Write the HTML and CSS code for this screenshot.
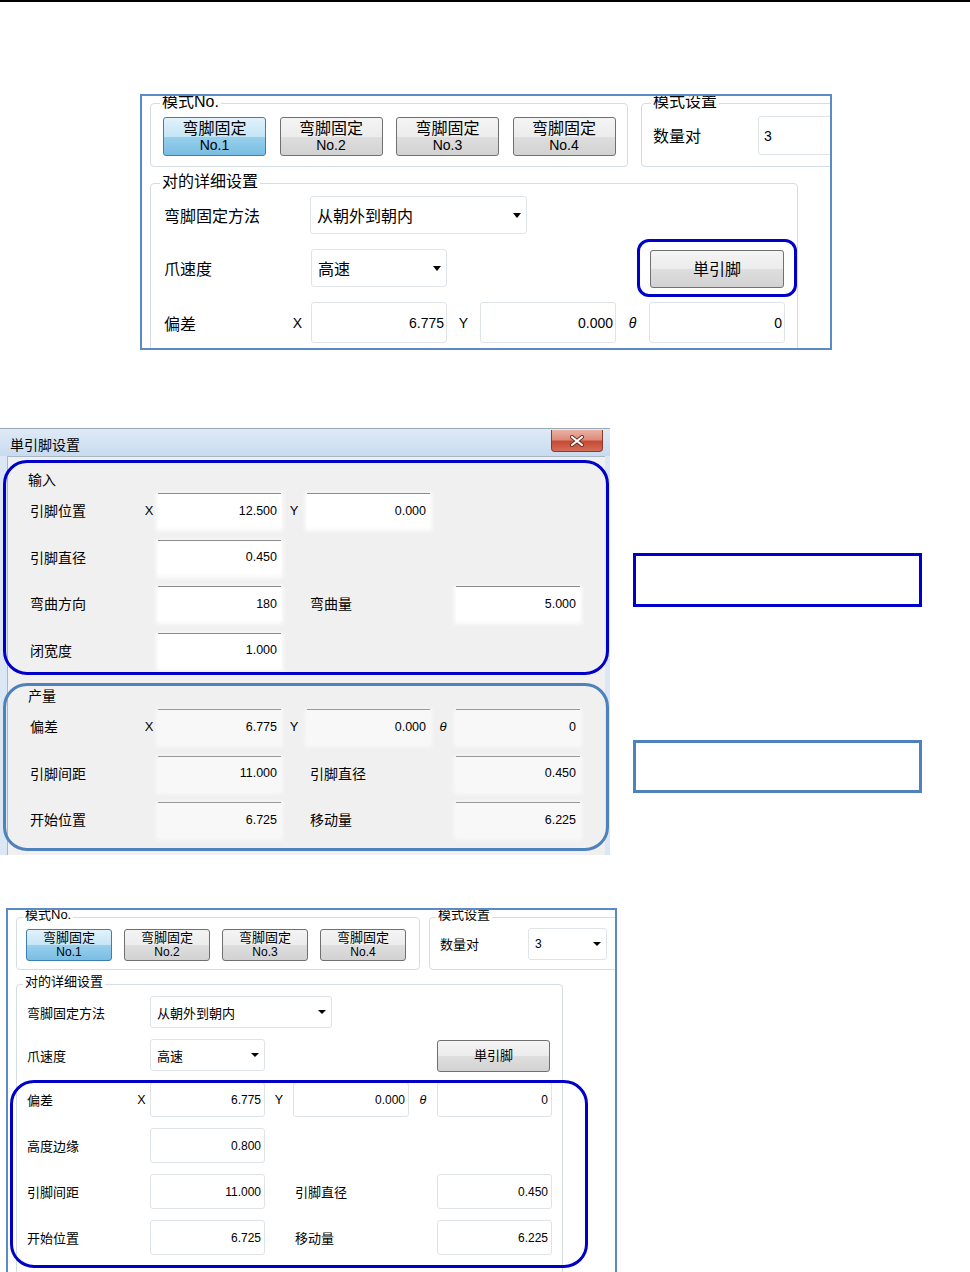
FILE: index.html
```html
<!DOCTYPE html>
<html lang="zh-CN">
<head>
<meta charset="utf-8">
<title>単引脚设置</title>
<link rel="stylesheet" href="styles.css">
</head>
<body>
<div class="topline"></div>

<section class="panel p1">
  <div class="row-top">
    <div class="group g-mode">
      <span class="legend">模式No.</span>
      <div class="btns">
        <div class="btn sel"><span>弯脚固定</span><span class="lat">No.1</span></div>
        <div class="btn"><span>弯脚固定</span><span class="lat">No.2</span></div>
        <div class="btn"><span>弯脚固定</span><span class="lat">No.3</span></div>
        <div class="btn"><span>弯脚固定</span><span class="lat">No.4</span></div>
      </div>
    </div>
    <div class="group g-set">
      <span class="legend">模式设置</span>
      <span class="lbl">数量对</span>
      <div class="field left">3</div>
    </div>
  </div>
  <div class="group g-detail">
    <span class="legend">对的详细设置</span>
    <div class="grid">
      <span class="lbl">弯脚固定方法</span>
      <div class="select s-wide"><span>从朝外到朝内</span><i class="arrow"></i></div>

      <span class="lbl">爪速度</span>
      <div class="select s-short"><span>高速</span><i class="arrow"></i></div>
      <div class="btn single ring"><span>単引脚</span></div>

      <span class="lbl">偏差</span>
      <span class="ax">X</span><div class="field">6.775</div>
      <span class="ax">Y</span><div class="field">0.000</div>
      <span class="ax th">θ</span><div class="field">0</div>
    </div>
  </div>
</section>

<section class="sec2">
  <div class="dialog">
    <div class="titlebar">
      <span class="title">単引脚设置</span>
      <div class="close">
        <svg width="16" height="12" viewBox="0 0 16 12"><path d="M3 2 L13 10 M13 2 L3 10" stroke="#6b2a20" stroke-width="4" stroke-linecap="round"/><path d="M3 2 L13 10 M13 2 L3 10" stroke="#ffffff" stroke-width="2.2" stroke-linecap="round"/></svg>
      </div>
    </div>
    <div class="dbody">
      <div class="dgroup in">
        <span class="dlegend">输入</span>
        <div class="dgrid">
          <span class="lbl">引脚位置</span>
          <span class="ax">X</span><div class="dfield">12.500</div>
          <span class="ax">Y</span><div class="dfield">0.000</div>

          <span class="lbl">引脚直径</span>
          <div class="dfield c3">0.450</div>

          <span class="lbl">弯曲方向</span>
          <div class="dfield c3">180</div>
          <span class="lbl c5">弯曲量</span>
          <div class="dfield c7">5.000</div>

          <span class="lbl">闭宽度</span>
          <div class="dfield c3">1.000</div>
        </div>
      </div>
      <div class="dgroup out">
        <span class="dlegend">产量</span>
        <div class="dgrid">
          <span class="lbl">偏差</span>
          <span class="ax">X</span><div class="dfield">6.775</div>
          <span class="ax">Y</span><div class="dfield">0.000</div>
          <span class="ax th">θ</span><div class="dfield">0</div>

          <span class="lbl">引脚间距</span>
          <div class="dfield c3">11.000</div>
          <span class="lbl c5">引脚直径</span>
          <div class="dfield c7">0.450</div>

          <span class="lbl">开始位置</span>
          <div class="dfield c3">6.725</div>
          <span class="lbl c5">移动量</span>
          <div class="dfield c7">6.225</div>
        </div>
      </div>
    </div>
  </div>
  <div class="callouts">
    <div class="callout c1"></div>
    <div class="callout c2"></div>
  </div>
</section>

<section class="panel p3">
  <div class="row-top">
    <div class="group g-mode">
      <span class="legend">模式No.</span>
      <div class="btns">
        <div class="btn sel"><span>弯脚固定</span><span class="lat">No.1</span></div>
        <div class="btn"><span>弯脚固定</span><span class="lat">No.2</span></div>
        <div class="btn"><span>弯脚固定</span><span class="lat">No.3</span></div>
        <div class="btn"><span>弯脚固定</span><span class="lat">No.4</span></div>
      </div>
    </div>
    <div class="group g-set">
      <span class="legend">模式设置</span>
      <span class="lbl">数量对</span>
      <div class="select s-num"><span class="lat">3</span><i class="arrow"></i></div>
    </div>
  </div>
  <div class="group g-detail">
    <span class="legend">对的详细设置</span>
    <div class="grid a">
      <span class="lbl">弯脚固定方法</span>
      <div class="select s-wide"><span>从朝外到朝内</span><i class="arrow"></i></div>

      <span class="lbl">爪速度</span>
      <div class="select s-short"><span>高速</span><i class="arrow"></i></div>
      <div class="btn single"><span>単引脚</span></div>
    </div>
    <div class="grid b">
      <span class="lbl">偏差</span>
      <span class="ax">X</span><div class="field">6.775</div>
      <span class="ax">Y</span><div class="field">0.000</div>
      <span class="ax th">θ</span><div class="field">0</div>

      <span class="lbl">高度边缘</span>
      <div class="field c3">0.800</div>

      <span class="lbl">引脚间距</span>
      <div class="field c3">11.000</div>
      <span class="lbl c5">引脚直径</span>
      <div class="field c7">0.450</div>

      <span class="lbl">开始位置</span>
      <div class="field c3">6.725</div>
      <span class="lbl c5">移动量</span>
      <div class="field c7">6.225</div>
    </div>
  </div>
</section>
</body>
</html>
```

FILE: styles.css
```css
* { box-sizing: border-box; margin: 0; padding: 0; }
html, body { width: 970px; height: 1272px; overflow: hidden; background: #fff; }
body { font-family: "Liberation Sans", "Noto Sans CJK SC", sans-serif; color: #000; }

.topline { height: 2px; background: #000; }

/* ---------- common ---------- */
.panel { border: 2px solid #5b8bc6; overflow: hidden; background: #fff; }
.row-top { display: flex; }
.group { position: relative; border: 1px solid #d5dde4; border-radius: 4px; flex-shrink: 0; }
.legend { position: absolute; background: #fff; padding: 0 2px; white-space: nowrap; }
.btns { display: flex; }
.btn {
  display: flex; flex-direction: column; align-items: center; justify-content: center;
  border: 1px solid #707070; border-radius: 3px;
  background: linear-gradient(#f4f4f4 0%, #ececec 50%, #dedede 51%, #d2d2d2 100%);
  white-space: nowrap;
}
.btn.sel {
  border-color: #3c7fb1;
  background: linear-gradient(#e2f2fb 0%, #c4e5f6 50%, #98d0ed 51%, #79bde2 100%);
}
.field {
  border: 1px solid #dfe4e9; border-radius: 3px; background: #fff;
  display: flex; align-items: center; justify-content: flex-end;
}
.field.left { justify-content: flex-start; }
.select {
  border: 1px solid #dfe4e9; border-radius: 3px; background: #fff;
  display: flex; align-items: center; justify-content: space-between;
  white-space: nowrap;
}
.arrow { display: block; width: 0; height: 0; border-left: 4px solid transparent; border-right: 4px solid transparent; border-top: 5px solid #000; }
.grid { display: grid; align-items: center; }
.lbl { white-space: nowrap; }
.grid .lbl, .dgrid .lbl { grid-column: 1; }
.ax { text-align: center; }
.th { font-style: italic; }
.grid .c3, .dgrid .c3 { grid-column: 3; }
.grid .c5, .dgrid .c5 { grid-column: 5; }
.grid .c7, .dgrid .c7 { grid-column: 7; }

/* ---------- panel 1 ---------- */
.p1 { margin: 92px 0 0 140px; width: 692px; height: 256px; font-size: 16px; }
.p1 .row-top { margin: 7px 0 0 8px; gap: 13px; }
.p1 .legend { left: 9px; top: -11px; line-height: 18px; }
.p1 .g-mode { width: 478px; height: 64px; padding: 13px 0 0 12px; }
.p1 .btns { gap: 13.5px; }
.p1 .btn { width: 103px; height: 39px; line-height: 17px; }
.p1 .btn .lat { font-size: 14px; }
.p1 .g-set { width: 220px; height: 64px; display: flex; align-items: flex-start; padding: 12px 0 0 11px; }
.p1 .g-set .lbl { width: 105px; line-height: 42px; }
.p1 .g-set .field { width: 100px; height: 39px; padding-left: 5px; font-size: 14px; }
.p1 .g-detail { margin: 16px 0 0 8px; width: 648px; height: 220px; padding: 12px 0 0 13px; }
.p1 .grid { grid-template-columns: 120px 27px 136px 33px 136px 33px 136px; grid-template-rows: 38px 38px 41px; row-gap: 15px; }
.p1 .select { grid-column: 3; height: 38px; padding: 0 5px 0 6px; justify-self: start; }
.p1 .select .arrow { border-left-width: 4.5px; border-right-width: 4.5px; }
.p1 .s-wide { width: 217px; margin-left: -1px; }
.p1 .s-short { width: 136px; }
.p1 .single { grid-column: 7; width: 134px; height: 38px; margin: 1px 0 0 1px; align-self: start; }
.p1 .field { height: 41px; font-size: 14px; padding-right: 2px; }
.p1 .ax { font-size: 14px; }
.ring { position: relative; }
.ring::after {
  content: ""; position: absolute; left: -14px; right: -14px; top: -12px; bottom: -10px;
  border: 3px solid #0000c8; border-radius: 12px;
}

/* ---------- dialog ---------- */
.sec2 { display: flex; margin-top: 78px; }
.dialog {
  width: 610px; height: 427px; flex-shrink: 0; overflow: hidden;
  background: #dbe7f4; border-top: 1px solid #9aa9b8;
  display: flex; flex-direction: column;
}
.titlebar {
  height: 27px; flex-shrink: 0; display: flex; justify-content: space-between; align-items: flex-start;
  background: linear-gradient(#dfeaf6, #c8dbef); padding-left: 10px;
}
.title { font-size: 14px; line-height: 18px; padding-top: 7px; }
.close {
  width: 52px; height: 22px; margin: 1px 7px 0 0;
  border: 1px solid #8d3a2c; border-top: 0; border-radius: 0 0 4px 4px;
  background: linear-gradient(#eab2a6 0%, #de8c7b 45%, #c74a33 55%, #d46e59 100%);
  display: flex; align-items: center; justify-content: center;
}
.dbody {
  flex: 1; margin: 0 5px 0 7px; background: #f0f0f0;
  border-left: 1px solid #a9b8c8; border-top: 1px solid #a9b8c8;
  font-size: 14px;
}
.dgroup { position: relative; }
.dgroup::after {
  content: ""; position: absolute; left: -5px; right: -4px; top: 0; bottom: 0;
  border: 3px solid #0000c8; border-radius: 24px;
}
.dgroup.in { margin-top: 3px; height: 215px; padding: 11px 0 0 20px; }
.dgroup.out { margin-top: 8px; height: 168px; padding: 4px 0 0 20px; }
.dgroup.out::after { border-color: #4f81bd; }
.dlegend { display: block; line-height: 18px; }
.dgrid {
  display: grid; margin: 4px 0 0 2px; align-items: center;
  grid-template-columns: 110px 18px 123px 26px 123px 26px 124px; grid-auto-rows: 34px;
}
.in .dgrid { row-gap: 12.67px; }
.out .dgrid { row-gap: 12.5px; }
.dgrid .lbl.c5 { padding-left: 3px; }
.dgrid .ax { font-size: 13px; }
.dfield {
  height: 34px; background: #fff; border-top: 1px solid #8a8a8a;
  display: flex; align-items: center; justify-content: flex-end; padding-right: 4px;
  font-size: 12.5px;
  box-shadow: 0 2px 4px 2px rgba(255,255,255,0.9);
}
.out .dfield { background: #f8f8f8; border-top-color: #999; box-shadow: 0 2px 4px 2px rgba(250,250,250,0.9); }

.callouts { margin-left: 23px; display: flex; flex-direction: column; }
.callout { width: 289px; border: 3px solid; }
.c1 { margin-top: 125px; height: 54px; border-color: #0000cc; }
.c2 { margin-top: 133px; height: 53px; border-color: #4f81bd; }

/* ---------- panel 3 ---------- */
.p3 { margin: 53px 0 0 6px; width: 611px; height: 364px; border-bottom: 0; font-size: 13px; }
.p3 .row-top { margin: 7px 0 0 8px; gap: 9px; }
.p3 .legend { left: 6px; top: -11px; line-height: 16px; }
.p3 .g-mode { width: 404px; height: 53px; padding: 11px 0 0 9px; }
.p3 .btns { gap: 12px; }
.p3 .btn { width: 86px; height: 32px; line-height: 14px; }
.p3 .btn .lat { font-size: 12px; }
.p3 .g-set { width: 220px; height: 53px; display: flex; align-items: flex-start; padding: 10px 0 0 10px; }
.p3 .g-set .lbl { width: 88px; line-height: 34px; }
.p3 .select { height: 32px; padding: 0 5px 0 6px; justify-self: start; }
.p3 .select .arrow { border-left-width: 4px; border-right-width: 4px; border-top-width: 4px; }
.p3 .s-num { width: 79px; font-size: 12px; }
.p3 .g-detail { margin: 14px 0 0 8px; width: 547px; height: 330px; padding: 11px 0 0 10px; }
.p3 .grid { grid-template-columns: 106px 17px 115px 28px 116px 28px 115px; row-gap: 11px; }
.p3 .grid.a { grid-template-rows: 32px 32px; }
.p3 .grid.a .select { grid-column: 3; }
.p3 .s-wide { width: 182px; }
.p3 .s-short { width: 115px; }
.p3 .single { grid-column: 7; width: 113px; height: 32px; margin-top: 2px; }
.p3 .grid.b { grid-template-rows: 35px 35px 35px 35px; margin-top: 11px; position: relative; }
.p3 .grid.b::after {
  content: ""; position: absolute; left: -17px; right: -26px; top: -2px; bottom: -13px;
  border: 3px solid #0000c8; border-radius: 24px;
}
.p3 .field { height: 35px; font-size: 12px; padding-right: 3px; }
.p3 .ax { font-size: 12.5px; }
.p3 .lbl.c5 { padding-left: 2px; }
```
